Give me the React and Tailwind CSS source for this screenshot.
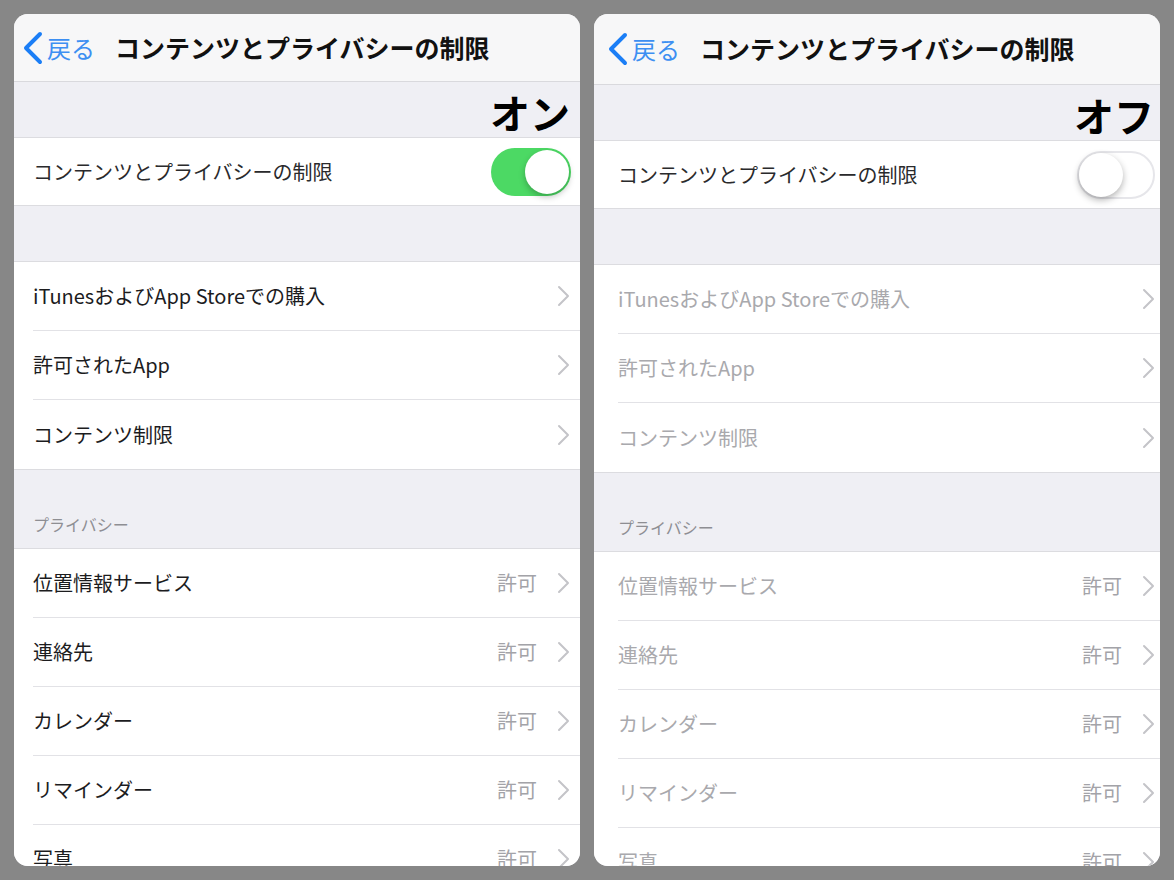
import React from 'react';

const GROUP_ONE = ['iTunesおよびApp Storeでの購入', '許可されたApp', 'コンテンツ制限'];
const PRIVACY = ['位置情報サービス', '連絡先', 'カレンダー', 'リマインダー', '写真'];

const Chevron = () => (
    <svg width="13" height="22" viewBox="0 0 13 22" fill="none" className="shrink-0">
        <path d="M2 2 L11 11 L2 20" stroke="#c4c4c8" strokeWidth="2" strokeLinecap="round" strokeLinejoin="round" />
    </svg>
);

const Toggle = ({ on }) =>
    on ? (
        <div className="w-[80px] h-[48px] rounded-full bg-[#4cd964] flex items-center justify-end pr-[2px]">
            <div className="w-[44px] h-[44px] rounded-full bg-white shadow-[0_3px_6px_rgba(0,0,0,0.25)]" />
        </div>
    ) : (
        <div className="w-[78px] h-[48px] rounded-full bg-white border-2 border-[#e6e6ea] flex items-center justify-start">
            <div className="w-[44px] h-[44px] rounded-full bg-white shadow-[0_3px_7px_rgba(0,0,0,0.3)]" />
        </div>
    );

const Row = ({ label, value, on, last }) => (
    <div className={`${on ? 'pl-[19px]' : 'pl-[24px]'} bg-white`}>
        <div className={`h-[69px] flex items-center ${on ? 'pr-[10px]' : 'pr-[5px]'} ${last ? '' : 'border-b border-[#e2e2e6]'}`}>
            <span className={`flex-1 text-[20px] ${on ? 'text-[#1c1c1e]' : 'text-[#a9a9ad]'}`}>{label}</span>
            {value && <span className="text-[20px] text-[#a3a3a8] mr-[20px]">{value}</span>}
            <Chevron />
        </div>
    </div>
);

const Panel = ({ on }) => (
    <div className="w-[566px] h-[852px] rounded-[14px] overflow-hidden bg-[#efeff4] flex flex-col">
        {/* Nav bar */}
        <div className={`${on ? 'h-[68px] pl-[6px]' : 'h-[71px] pl-[11px]'} shrink-0 bg-[#f7f7f8] border-b border-[#d9d9dd] flex items-center`}>
            <svg width="24" height="34" viewBox="0 0 24 34" fill="none" className="shrink-0">
                <path d="M20 3 L6 17 L20 31" stroke="#1b7ef6" strokeWidth="4" strokeLinecap="round" strokeLinejoin="round" />
            </svg>
            <span className="ml-[3px] text-[24px] text-[#3d8ff2]">戻る</span>
            <span className="ml-[20px] text-[25px] font-bold text-[#111]">コンテンツとプライバシーの制限</span>
        </div>

        {/* Status label */}
        <div className={`h-[56px] shrink-0 flex justify-end ${on ? 'pr-[10px]' : 'pr-[6px]'} pt-[6px] border-b border-[#dcdce0]`}>
            <span className="text-[40px] leading-[48px] font-bold text-black">{on ? 'オン' : 'オフ'}</span>
        </div>

        {/* Master toggle */}
        <div className={`h-[68px] shrink-0 bg-white flex items-center ${on ? 'pl-[19px] pr-[9px]' : 'pl-[24px] pr-[5px]'} border-b border-[#dcdce0]`}>
            <span className="flex-1 text-[20px] text-[#2a2a2c]">コンテンツとプライバシーの制限</span>
            <Toggle on={on} />
        </div>

        <div className="h-[56px] shrink-0 border-b border-[#dcdce0]" />

        {GROUP_ONE.map((label, idx) => (
            <Row key={label} label={label} on={on} last={idx === GROUP_ONE.length - 1} />
        ))}

        {/* Privacy header */}
        <div className={`h-[80px] shrink-0 border-t border-[#dcdce0] border-b flex items-end ${on ? 'pl-[19px]' : 'pl-[24px]'} pb-[12px]`}>
            <span className="text-[16px] text-[#8e8e93]">プライバシー</span>
        </div>

        {PRIVACY.map((label) => (
            <Row key={label} label={label} value="許可" on={on} />
        ))}
    </div>
);

const App = () => {
    return (
        <div className="w-[1174px] h-[880px] bg-[#878787] flex gap-[14px] p-[14px] font-['Noto_Sans_CJK_JP','Noto_Sans',sans-serif]">
            <Panel on />
            <Panel on={false} />
        </div>
    );
};

export default App;
